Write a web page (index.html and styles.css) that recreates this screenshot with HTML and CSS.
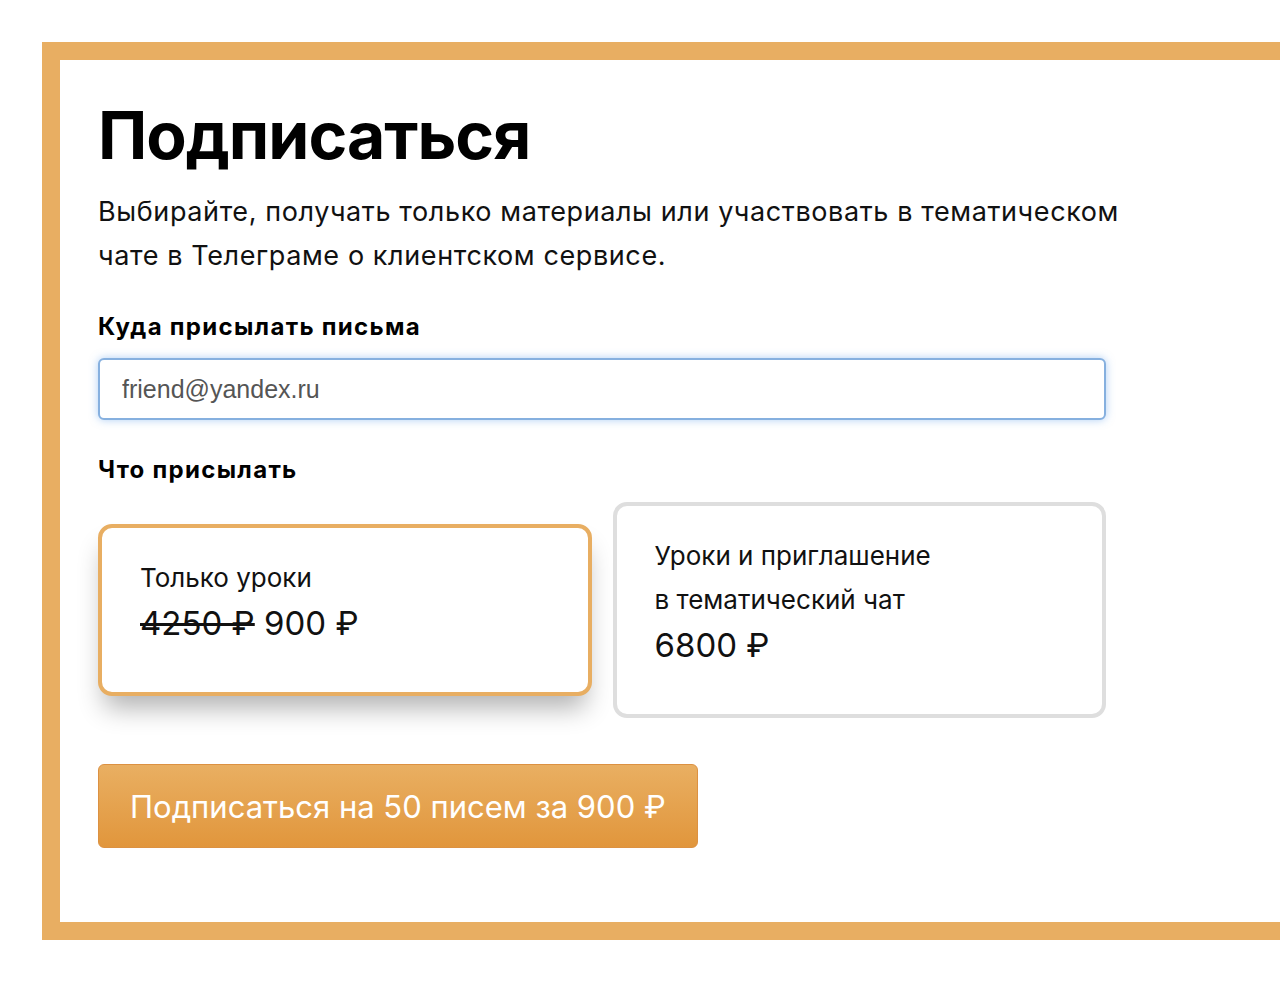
FILE: index.html
```html
<!DOCTYPE html>
<html lang="ru">
<head>
    <meta charset="UTF-8">
    <meta name="viewport" content="width=device-width, initial-scale=1.0">
    <title>Подписаться</title>
    <link rel="stylesheet" href="styles.css">
</head>
<body>
    <div class="frame">
        <div class="subscribe">
            <h1 class="title">Подписаться</h1>
            <p class="lead">Выбирайте, получать только материалы или участвовать в тематическом чате в Телеграме о клиентском сервисе.</p>

            <label class="field-label" for="email">Куда присылать письма</label>
            <input class="email-input" id="email" type="email" placeholder="friend@yandex.ru">

            <div class="field-label field-label-plans">Что присылать</div>
            <div class="plans">
                <div class="plan plan-active">
                    <div class="plan-name">Только уроки</div>
                    <div class="plan-price"><s>4250 ₽</s> 900 ₽</div>
                </div>
                <div class="plan">
                    <div class="plan-name">Уроки и приглашение<br>в тематический чат</div>
                    <div class="plan-price">6800 ₽</div>
                </div>
            </div>

            <button class="subscribe-button">Подписаться на 50 писем за 900 ₽</button>
        </div>
    </div>
</body>
</html>
```

FILE: styles.css
```css
body {
    font-family: Inter, "Liberation Sans", Arial, sans-serif;
    background-color: #fff;
    color: #111;
    margin: 0;
    padding: 42px 0 0 42px;
    overflow: hidden;
}

.frame {
    width: 1300px;
    border: 18px solid #e8ae62;
    background: white;
    padding: 36px 38px 74px;
}

.subscribe {
    width: 1060px;
}

.title {
    font-size: 66px;
    line-height: 79px;
    font-weight: bold;
    letter-spacing: -1px;
    color: #000;
    margin: 0 0 15px;
}

.lead {
    font-size: 27px;
    line-height: 44px;
    letter-spacing: 0.6px;
    margin: 0 0 33px;
}

.field-label {
    display: block;
    font-size: 24px;
    line-height: 31px;
    font-weight: bold;
    letter-spacing: 1.3px;
    color: #000;
    margin-bottom: 16px;
}

.field-label-plans {
    margin-bottom: 17px;
}

.email-input {
    display: block;
    box-sizing: border-box;
    width: 1008px;
    height: 62px;
    padding: 0 22px;
    border: 2px solid #86b0df;
    border-radius: 6px;
    box-shadow: 0 0 8px rgba(95, 160, 235, 0.5);
    font-family: "Liberation Sans", Arial, sans-serif;
    font-size: 25px;
    color: #333;
    margin-bottom: 34px;
    outline: none;
}

.email-input::placeholder {
    color: #555;
}

.plans {
    display: flex;
    align-items: center;
    gap: 21px;
    width: 1008px;
    margin-bottom: 46px;
}

.plan {
    flex: 1;
    border: 4px solid #dedede;
    border-radius: 14px;
    padding: 28px 38px 45px;
    background: white;
}

.plan-active {
    border-color: #e8ae62;
    box-shadow: 0 18px 26px -6px rgba(0, 0, 0, 0.3);
}

.plan-name {
    font-size: 26px;
    line-height: 44px;
}

.plan-price {
    font-size: 33px;
    line-height: 47px;
}

.subscribe-button {
    height: 84px;
    padding: 0 31px;
    border: 1px solid #dc9142;
    border-radius: 6px;
    background: linear-gradient(#e9af62, #e1963c);
    color: white;
    font-family: inherit;
    font-size: 31px;
    cursor: pointer;
}
```
